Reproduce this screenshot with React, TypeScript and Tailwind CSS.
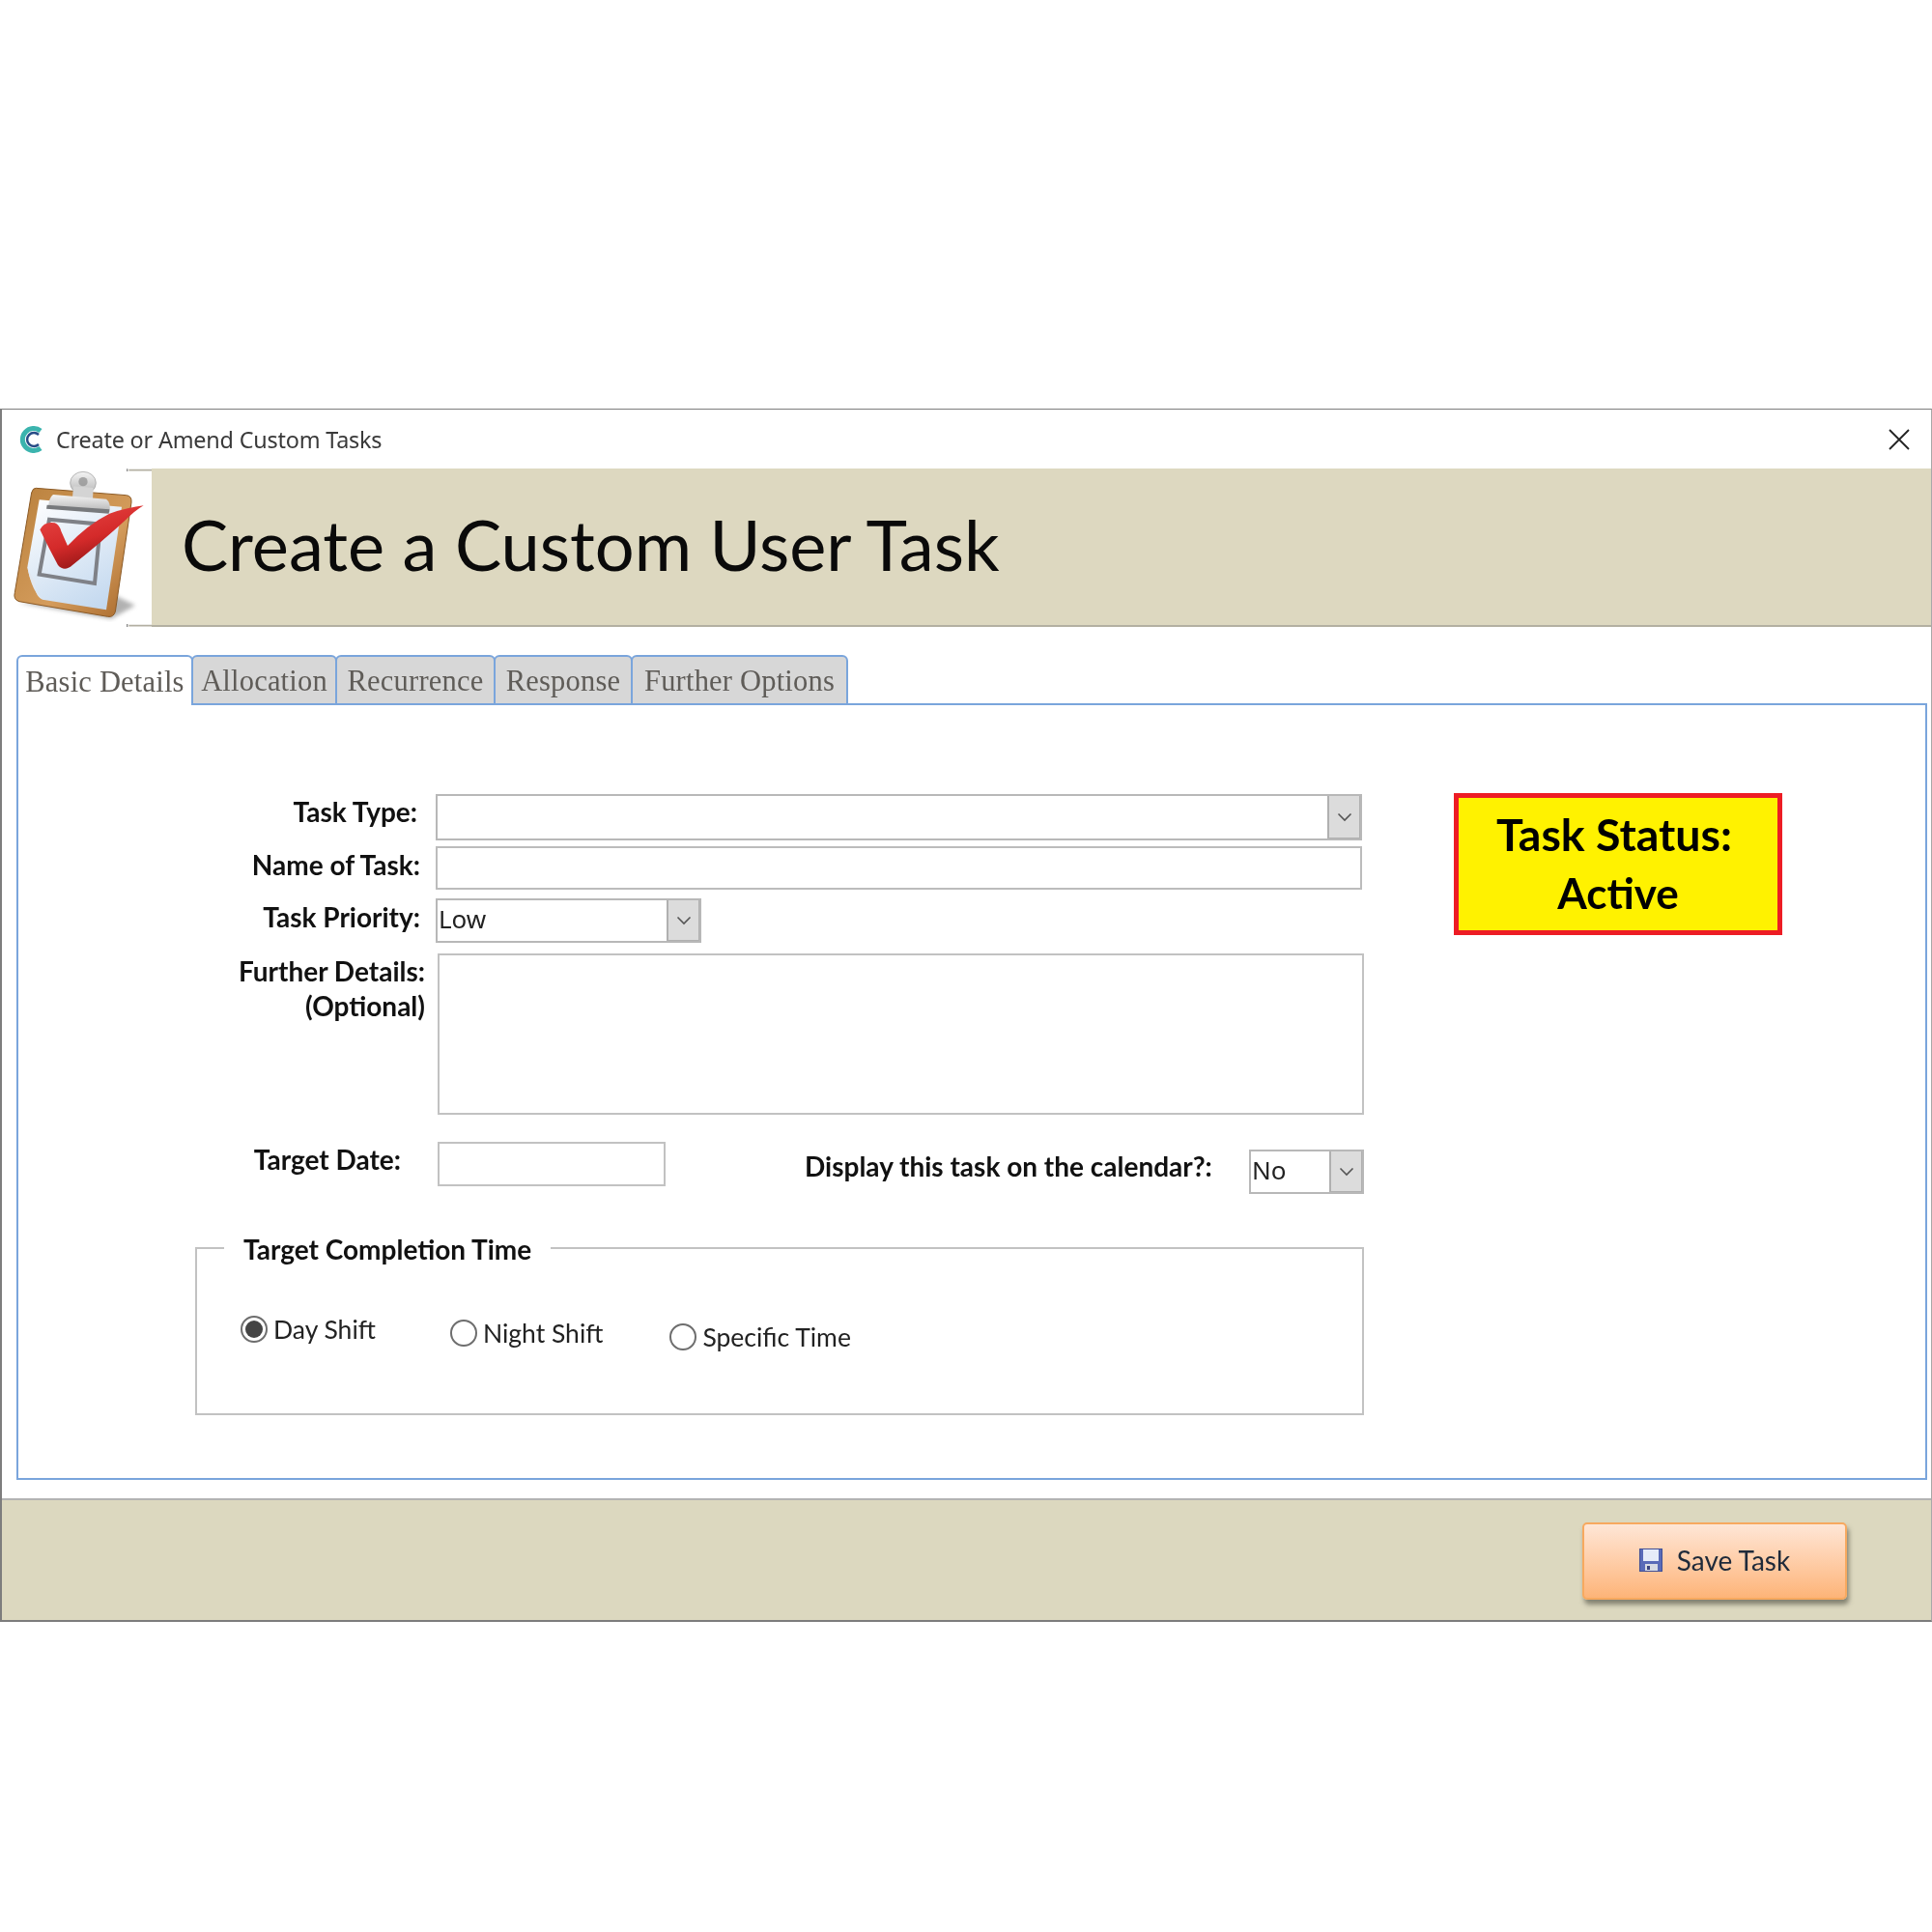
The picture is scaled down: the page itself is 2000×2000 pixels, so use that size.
import React from "react";

const calibri = "font-['Lato','Open_Sans',sans-serif]";

function Chevron() {
  return (
    <svg width="16" height="10" viewBox="0 0 16 10" fill="none" stroke="#555" strokeWidth="1.6">
      <path d="M1.5 1.5 L8 8 L14.5 1.5" />
    </svg>
  );
}

function Combo({ className, value }: { className: string; value?: string }) {
  return (
    <div className={"flex border-2 border-[#b8b8b8] bg-white " + className}>
      <div className="flex-1 pl-[1px] text-[26px] leading-[38px] text-[#222] font-['Noto_Sans',sans-serif]">{value}</div>
      <div className="flex w-[34px] items-center justify-center border-l-2 border-r border-b border-[#b0b0b0] bg-[#dcdcdc]">
        <Chevron />
      </div>
    </div>
  );
}

function Radio({ checked, label, className }: { checked?: boolean; label: string; className?: string }) {
  return (
    <div className={"flex items-center gap-[6px] " + (className ?? "")}>
      <div className="flex h-[28px] w-[28px] items-center justify-center rounded-full border-2 border-[#6e6e6e] bg-white">
        {checked && <div className="h-[18px] w-[18px] rounded-full bg-[#444]" />}
      </div>
      <span className={"text-[26.5px] leading-[32px] text-[#222] " + calibri}>{label}</span>
    </div>
  );
}

function Label({ className, children }: { className: string; children: React.ReactNode }) {
  return <div className={"text-right text-[28px] font-bold leading-[36px] text-[#111] whitespace-nowrap " + calibri + " " + className}>{children}</div>;
}

function ClipboardIcon() {
  return (
    <svg width="157" height="164" viewBox="0 45 471 492">
      <defs>
        <linearGradient id="board" x1="0" y1="0" x2="1" y2="1">
          <stop offset="0" stopColor="#b9803c" />
          <stop offset="0.6" stopColor="#d49c5c" />
          <stop offset="1" stopColor="#a8692c" />
        </linearGradient>
        <linearGradient id="paper" x1="0.2" y1="0" x2="0.7" y2="1">
          <stop offset="0" stopColor="#fbfcfe" />
          <stop offset="1" stopColor="#c4d9ef" />
        </linearGradient>
        <linearGradient id="metal" x1="0" y1="0" x2="0" y2="1">
          <stop offset="0" stopColor="#f4f4f4" />
          <stop offset="1" stopColor="#b4b4b4" />
        </linearGradient>
        <linearGradient id="check" x1="0" y1="0" x2="0.5" y2="1">
          <stop offset="0" stopColor="#ea4a48" />
          <stop offset="0.6" stopColor="#d42a2a" />
          <stop offset="1" stopColor="#8e1414" />
        </linearGradient>
        <filter id="soft"><feGaussianBlur stdDeviation="7" /></filter>
      </defs>
      <path d="M60 462 L345 512 L420 470 L360 440 Z" fill="#666" opacity="0.5" filter="url(#soft)" />
      <path d="M112 106 L392 128 Q410 130 408 150 L358 490 Q352 508 335 505 L60 458 Q40 452 46 430 L98 120 Q102 105 112 106 Z" fill="url(#board)" stroke="#8b5a26" strokeWidth="3" />
      <path d="M122 142 L378 164 L330 484 L132 452 Q100 430 85 352 Z" fill="url(#paper)" />
      <path d="M85 352 Q96 415 132 452 Q105 440 110 395 Q98 385 85 352 Z" fill="#e2e8f0" />
      <path d="M153 203 L312 218 L294 402 L122 374 Z" fill="none" stroke="#7f8187" strokeWidth="12" />
      <ellipse cx="258" cy="90" rx="40" ry="35" fill="url(#metal)" stroke="#999" strokeWidth="2" />
      <circle cx="258" cy="86" r="14" fill="#8c8c8c" opacity="0.7" />
      <path d="M228 100 L290 105 L288 140 L225 136 Z" fill="#d4d4d4" />
      <path d="M165 126 L330 140 Q345 150 340 180 L150 165 Q152 135 165 126 Z" fill="url(#metal)" />
      <path d="M146 158 L340 172 L338 185 L144 170 Z" fill="#77797c" />
      <path d="M124 235 Q138 208 170 214 Q185 220 190 240 L210 285 Q270 220 340 185 Q400 165 446 160 Q420 175 390 205 Q320 270 225 345 Q200 368 180 345 Q150 290 124 235 Z" fill="url(#check)" />
      <path d="M400 50 H471 M400 533 H471" stroke="#b3b0a2" strokeWidth="5" />
      <path d="M395 46 V54 M395 528 V538" stroke="#888" strokeWidth="4" />
    </svg>
  );
}

function Floppy() {
  return (
    <svg width="24" height="24" viewBox="0 0 24 24">
      <rect x="0.5" y="0.5" width="23" height="23" fill="#5a6bb8" stroke="#3f4e96" />
      <rect x="4" y="1" width="16" height="12" fill="#e6ecf8" />
      <rect x="6" y="16" width="13" height="7" fill="#d8dbe3" />
      <rect x="8" y="18" width="3" height="4" fill="#3b4480" />
    </svg>
  );
}

function Tab({ label, active, className }: { label: string; active?: boolean; className: string }) {
  return (
    <div className={"relative -mr-[2px] flex h-[52px] items-center justify-center rounded-t-[6px] border-2 border-[#7aa5dc] pt-[4px] text-[30.5px] tracking-[0.2px] font-['Liberation_Serif',serif] text-[#5f5c58] " + (active ? "z-10 border-b-0 bg-white " : "bg-[#d7d7d7] ") + className}>
      {label}
    </div>
  );
}

export default function App() {
  return (
    <div className="h-[2000px] w-[2000px] bg-white pt-[423px]">
      <div className="flex h-[1256px] w-[2000px] flex-col border border-b-2 border-[#7d7d7d] border-r-[#a8a8a8] border-l-2 bg-white blur-[0.4px]">
        {/* title bar */}
        <div className="flex h-[61px] shrink-0 items-center pl-[18px] pr-[22px]">
          <svg width="26" height="28" viewBox="0 0 26 28" fill="none">
            <path d="M22 5 A11.5 11.5 0 1 0 22 23" stroke="#3bb4ae" strokeWidth="5" />
            <path d="M20 9 A7 7 0 1 0 20 19" stroke="#274c86" strokeWidth="2.5" />
          </svg>
          <span className="ml-[12px] text-[23.4px] leading-[30px] tracking-[-0.2px] text-[#3a3a3a] font-['Noto_Sans',sans-serif]">Create or Amend Custom Tasks</span>
          <svg className="ml-auto" width="22" height="22" viewBox="0 0 22 22" stroke="#222" strokeWidth="1.8">
            <path d="M1 1 L21 21 M21 1 L1 21" />
          </svg>
        </div>
        {/* header */}
        <div className="flex h-[164px] shrink-0">
          <div className="-ml-[2px] w-[157px] shrink-0"><ClipboardIcon /></div>
          <div className={"flex flex-1 items-center border-b-2 border-[#b3b0a2] bg-[#ddd8c0] pb-[7px] pl-[31px] text-[72.2px] leading-[80px] text-[#0a0a0a] " + calibri}>
            Create a Custom User Task
          </div>
        </div>
        {/* tabs */}
        <div className="flex shrink-0 pl-[15px] pt-[29px]">
          <Tab label="Basic Details" active className="w-[183px]" />
          <Tab label="Allocation" className="w-[151px]" />
          <Tab label="Recurrence" className="w-[166px]" />
          <Tab label="Response" className="w-[144px]" />
          <Tab label="Further Options" className="w-[225px]" />
        </div>
        {/* panel */}
        <div className="-mt-[2px] ml-[15px] mr-[4px] flex h-[804px] shrink-0 border-2 border-[#7aa5dc] bg-white">
          <div className="w-[1394px] shrink-0 pt-[92px]">
            <div className="flex items-start">
              <Label className="w-[413px]">Task Type:</Label>
              <Combo className="ml-[19px] h-[48px] w-[959px]" />
            </div>
            <div className="mt-[6px] flex items-start">
              <Label className="w-[416px] pt-[1px]">Name of Task:</Label>
              <div className="ml-[16px] h-[45px] w-[959px] border-2 border-[#bcbcbc]" />
            </div>
            <div className="mt-[9px] flex items-start">
              <Label className="w-[416px] pt-[1px]">Task Priority:</Label>
              <Combo className="ml-[16px] h-[46px] w-[275px]" value="Low" />
            </div>
            <div className="mt-[11px] flex items-start">
              <Label className="w-[421px]">Further Details:<br />(Optional)</Label>
              <div className="ml-[13px] h-[167px] w-[959px] border-2 border-[#c2c2c2]" />
            </div>
            <div className="mt-[28px] flex items-start">
              <Label className="w-[396px]">Target Date:</Label>
              <div className="ml-[38px] h-[46px] w-[236px] border-2 border-[#c2c2c2]" />
              <Label className="ml-[144px] w-[421px] pt-[7px]">Display this task on the calendar?:</Label>
              <Combo className="ml-[39px] mt-[8px] h-[46px] w-[119px]" value="No" />
            </div>
            <div className="relative ml-[183px] mt-[55px] flex h-[174px] w-[1210px] items-start border-2 border-[#c2c2c2] pl-[45px] pt-[67px]">
              <div className={"absolute left-[28px] top-[-18px] bg-white px-[20px] text-[28px] font-bold leading-[36px] text-[#111] " + calibri}>Target Completion Time</div>
              <Radio checked label="Day Shift" />
              <Radio label="Night Shift" className="ml-[77px] mt-[4px]" />
              <Radio label="Specific Time" className="ml-[69px] mt-[8px]" />
            </div>
          </div>
          <div className={"ml-[92px] mt-[91px] flex h-[147px] w-[340px] flex-col items-center justify-center border-[5px] border-[#ed1c24] bg-[#fff200] pb-[2px] text-[46.5px] font-bold leading-[61px] text-black " + calibri}>
            <div className="-ml-[8px]">Task Status:</div>
            <div className="text-[44px]">Active</div>
          </div>
        </div>
        {/* footer */}
        <div className="mt-[19px] flex flex-1 items-start justify-end border-t-2 border-[#b3b3b3] bg-[#dcd8bf] pr-[87px] pt-[23px]">
          <div className={"flex h-[80px] w-[274px] items-center justify-center gap-[15px] rounded-[5px] border-2 border-[#f7a95f] bg-gradient-to-b from-[#fee6d6] to-[#fdb478] pb-[2px] text-[28px] text-[#1f2a3a] shadow-[2px_5px_5px_rgba(60,60,50,0.55)] " + calibri}>
            <Floppy />
            <span>Save Task</span>
          </div>
        </div>
      </div>
    </div>
  );
}
